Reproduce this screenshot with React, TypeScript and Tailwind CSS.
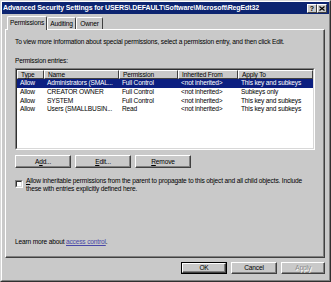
import React from "react";

const font = { fontFamily: '"Liberation Sans", Arial, sans-serif' };

function Btn({ children, w, def, disabled }: { children: React.ReactNode; w: string; def?: boolean; disabled?: boolean }) {
  const inner = (
    <div
      className={`h-full flex items-center justify-center bg-[#c9c9c9] border border-t-white border-l-white border-r-[#404040] border-b-[#404040] shadow-[inset_-1px_-1px_#808080] ${disabled ? "text-[#8a8a8a] [text-shadow:1px_1px_0_#ffffff]" : "text-black"}`}
    >
      {children}
    </div>
  );
  if (def) {
    return <div className={`${w} h-full border border-black`}>{inner}</div>;
  }
  return <div className={`${w} h-full`}>{inner}</div>;
}

const cols = [
  { w: "w-[27px]", label: "Type" },
  { w: "w-[75px]", label: "Name" },
  { w: "w-[59px]", label: "Permission" },
  { w: "w-[60px]", label: "Inherited From" },
  { w: "w-[75px]", label: "Apply To" },
];

const rows = [
  ["Allow", "Administrators (SMAL...", "Full Control", "<not inherited>", "This key and subkeys"],
  ["Allow", "CREATOR OWNER", "Full Control", "<not inherited>", "Subkeys only"],
  ["Allow", "SYSTEM", "Full Control", "<not inherited>", "This key and subkeys"],
  ["Allow", "Users (SMALLBUSIN...", "Read", "<not inherited>", "This key and subkeys"],
];

export default function App() {
  return (
    <div
      style={font}
      className="w-[331px] h-[282px] bg-[#c9c9c9] border border-t-[#d8d8d8] border-l-[#d8d8d8] border-r-[#303030] border-b-[#303030] text-[6.6px] tracking-[-0.17px] leading-[8px] text-black overflow-hidden"
    >
      <div className="w-full h-full border border-t-white border-l-white border-r-[#808080] border-b-[#808080] flex flex-col">
        {/* Title bar */}
        <div className="h-[12px] bg-[#0c2470] flex items-center pl-[1px] pr-[2px]">
          <div className="flex-1 text-white font-bold text-[7px] tracking-[-0.12px] whitespace-nowrap overflow-hidden">
            Advanced Security Settings for USERS\.DEFAULT\Software\Microsoft\RegEdt32
          </div>
          <div className="flex">
            <div className="w-[10px] h-[9px] bg-[#c9c9c9] border border-t-white border-l-white border-r-[#404040] border-b-[#404040] flex items-center justify-center font-bold text-[7px] leading-none tracking-normal">
              ?
            </div>
            <div className="w-[10px] h-[9px] bg-[#c9c9c9] border border-t-white border-l-white border-r-[#404040] border-b-[#404040] flex items-center justify-center">
              <svg width="6" height="5" viewBox="0 0 6 5">
                <path d="M0.5 0.5 L5.5 4.5 M5.5 0.5 L0.5 4.5" stroke="#000" strokeWidth="1.2" />
              </svg>
            </div>
          </div>
        </div>

        <div className="flex-1 flex flex-col px-[3px]">
          {/* Tabs */}
          <div className="h-[15px] flex items-end pl-[2px]">
            <div className="h-[14px] w-[40px] -mb-[1px] relative z-10 bg-[#c9c9c9] border border-b-0 border-t-white border-l-white border-r-[#404040] rounded-t-[2px] flex items-center justify-center pb-[1px]">
              Permissions
            </div>
            <div className="h-[12px] w-[29px] bg-[#c9c9c9] border border-b-0 border-t-white border-l-white border-r-[#404040] rounded-t-[2px] flex items-center justify-center">
              Auditing
            </div>
            <div className="h-[12px] w-[27px] bg-[#c9c9c9] border border-b-0 border-t-white border-l-white border-r-[#404040] rounded-t-[2px] flex items-center justify-center">
              Owner
            </div>
          </div>

          {/* Panel */}
          <div className="h-[229px] w-[320px] border border-t-white border-l-white border-r-[#404040] border-b-[#404040] shadow-[inset_-1px_-1px_#808080] flex flex-col pl-[9px]">
            <div className="mt-[8px] whitespace-nowrap">
              To view more information about special permissions, select a permission entry, and then click Edit.
            </div>
            <div className="mt-[11px]">Permission entries:</div>

            {/* List */}
            <div className="mt-[3px] w-[300px] h-[82px] border border-t-[#808080] border-l-[#808080] border-r-white border-b-white">
              <div className="w-full h-full border border-t-[#303030] border-l-[#303030] border-r-[#d8d8d8] border-b-[#d8d8d8] bg-white flex flex-col">
                <div className="flex h-[9px]">
                  {cols.map((c) => (
                    <div
                      key={c.label}
                      className={`${c.w} h-full bg-[#c9c9c9] border-t border-l border-t-white border-l-white border-r border-b border-r-[#404040] border-b-[#404040] pl-[3px] flex items-center whitespace-nowrap`}
                    >
                      {c.label}
                    </div>
                  ))}
                </div>
                {rows.map((r, i) => (
                  <div
                    key={i}
                    className={`flex h-[8.7px] items-center ${i === 0 ? "bg-[#0c1f80] text-white" : ""}`}
                  >
                    {r.map((cell, j) => (
                      <div key={j} className={`${cols[j].w} pl-[3px] whitespace-nowrap overflow-hidden`}>
                        {cell}
                      </div>
                    ))}
                  </div>
                ))}
              </div>
            </div>

            {/* Add / Edit / Remove */}
            <div className="mt-[5px] h-[13px] flex gap-[4px]">
              <Btn w="w-[56px]">
                <span>
                  A<span className="underline">d</span>d...
                </span>
              </Btn>
              <Btn w="w-[56px]">
                <span>
                  <span className="underline">E</span>dit...
                </span>
              </Btn>
              <Btn w="w-[56px]">
                <span>
                  <span className="underline">R</span>emove
                </span>
              </Btn>
            </div>

            {/* Checkbox */}
            <div className="mt-[9px] flex">
              <div className="mt-[3px] w-[8px] h-[8px] border border-t-[#808080] border-l-[#808080] border-r-white border-b-white shrink-0">
                <div className="w-full h-full bg-white border border-t-[#303030] border-l-[#303030] border-r-[#d8d8d8] border-b-[#d8d8d8]" />
              </div>
              <div className="ml-[3px] w-[296px] whitespace-nowrap">
                <span className="underline">A</span>llow inheritable permissions from the parent to propagate to this object and all child objects. Include
                <br />
                these with entries explicitly defined here.
              </div>
            </div>

            <div className="mt-[45px]">
              Learn more about <span className="underline text-[#4848a8]">access control</span>.
            </div>
          </div>

          {/* Bottom buttons */}
          <div className="mt-[4px] h-[12px] flex justify-end gap-[4px] pr-[1px]">
            <Btn w="w-[46px]" def>
              OK
            </Btn>
            <Btn w="w-[46px]">Cancel</Btn>
            <Btn w="w-[44px]" disabled>
              Apply
            </Btn>
          </div>
        </div>
      </div>
    </div>
  );
}
